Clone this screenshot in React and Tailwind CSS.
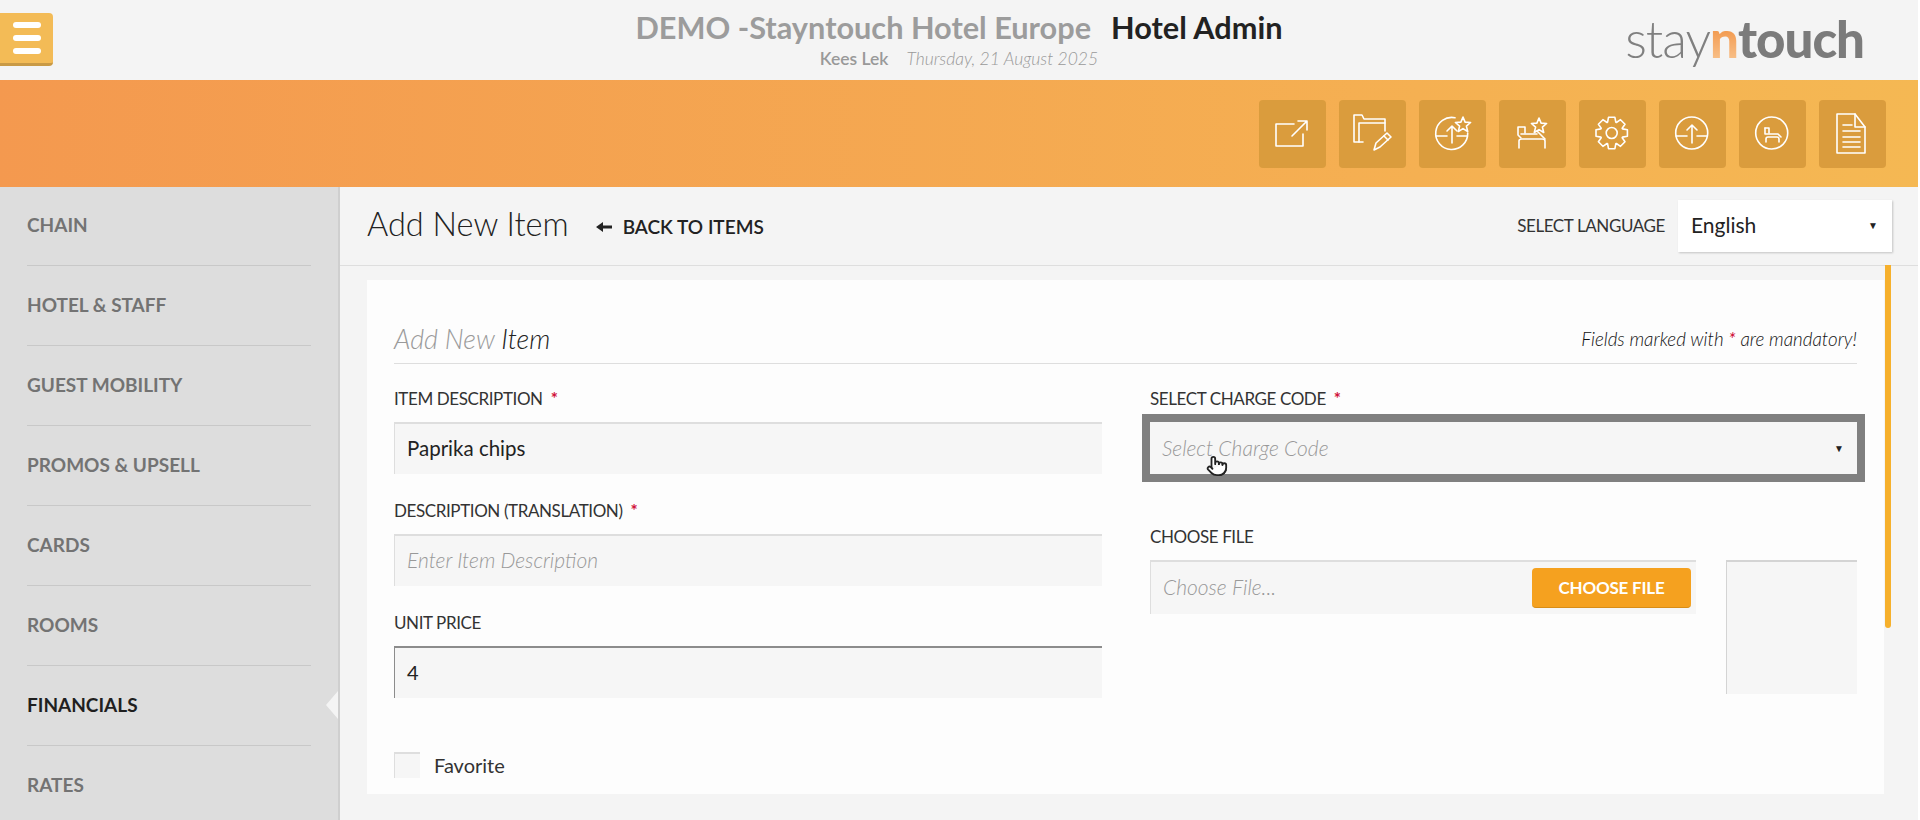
import React from "react";
import { Pointer } from "lucide-react";

const navItems = ["CHAIN", "HOTEL & STAFF", "GUEST MOBILITY", "PROMOS & UPSELL", "CARDS", "ROOMS", "FINANCIALS", "RATES"];

// 8 tooth gear outline, used by the settings button
const gearPath = () => {
  const pts = [];
  for (let i = 0; i < 8; i++) {
    const a = (i * Math.PI) / 4;
    [[-0.36, 11.5], [-0.2, 16], [0.2, 16], [0.36, 11.5]].forEach(([d, r]) => {
      pts.push(`${(32.7 + r * Math.cos(a + d)).toFixed(1)} ${(33 + r * Math.sin(a + d)).toFixed(1)}`);
    });
  }
  return "M" + pts.join("L") + "Z";
};

const Star = ({ cx, cy, r = 8 }) => {
  const pts = [];
  for (let i = 0; i < 10; i++) {
    const a = -Math.PI / 2 + (i * Math.PI) / 5;
    const rad = i % 2 ? r * 0.45 : r;
    pts.push(`${(cx + rad * Math.cos(a)).toFixed(1)},${(cy + rad * Math.sin(a)).toFixed(1)}`);
  }
  return <polygon points={pts.join(" ")} />;
};

const icons = [
  <>
    <path d="M35 24H17V46H44V34" />
    <path d="M33 36L48 21M39 21H48V30" />
  </>,
  <>
    <path d="M24 42H15V15H23L25 19H46V31" />
    <path d="M20 42V23H46" />
    <path d="M35 50L37 43L48 33L52 37L41 47Z" />
    <path d="M45 36L49 40" />
  </>,
  <>
    <path d="M36 17.8A16 16 0 1 0 48.7 33" />
    <path d="M17 36H28M38 36H48" />
    <path d="M33 43V26M28 31L33 26L38 31" />
    <Star cx={44} cy={25} />
  </>,
  <>
    <path d="M19 27H26V33M19 27V35L22 38" />
    <path d="M22 34H38M38 31L46 39" />
    <path d="M20 48V41Q20 39 23 39H43Q46 39 46 41V48" />
    <Star cx={40} cy={26} />
  </>,
  <>
    <path d={gearPath()} />
    <circle cx="32.7" cy="33" r="5.5" />
  </>,
  <>
    <circle cx="32.7" cy="33" r="16" />
    <path d="M17 36H28M38 36H48" />
    <path d="M33 43V25M28 30L33 25L38 30" />
  </>,
  <>
    <circle cx="32.7" cy="33" r="16" />
    <path d="M26 28V34H39L42 37" />
    <path d="M26 28H30V33" />
    <path d="M27 42V39Q27 37 29 37H38Q40 37 40 39V42" />
  </>,
  <>
    <path d="M18 14H36L46 27V53H18Z" />
    <path d="M36 14V27H46" />
    <path d="M24 25H33M24 31H41M24 37H41M24 42H41M24 47H41" />
  </>,
];

const Req = () => <span className="ml-2 font-bold text-[#d0103a]">*</span>;

function Field({ label, required, children }) {
  return (
    <div>
      <div className="flex h-6 items-center text-[17px] tracking-[-0.4px] text-[#333]">
        {label}
        {required && <Req />}
      </div>
      <div className="mt-[11px]">{children}</div>
    </div>
  );
}

const inputBase = "flex h-[52px] items-center border-t-2 border-l border-[#dedede] bg-[#f6f6f6] pb-[2px] pl-3";

export default function App() {
  return (
    <div className="h-[820px] w-[1920px] overflow-hidden bg-white font-[Lato,sans-serif]">
      <div className="w-[1918px]">
        {/* top bar */}
        <div className="grid h-20 grid-cols-[1fr_auto_1fr] bg-[#f4f4f4]">
          <div>
            <button className="mt-[13px] flex h-[53px] w-[53px] flex-col items-center justify-center gap-[7px] rounded-r-sm border-b-[3px] border-[#c99a45] bg-[#f3bb56]">
              <span className="h-[6px] w-[28px] rounded-sm bg-white" />
              <span className="h-[6px] w-[28px] rounded-sm bg-white" />
              <span className="h-[6px] w-[28px] rounded-sm bg-white" />
            </button>
          </div>
          <div className="flex flex-col items-center pt-[8px]">
            <div className="flex h-10 items-center text-[30.7px] font-bold">
              <span className="text-[#9c9c9c]">DEMO -Stayntouch Hotel Europe</span>
              <span className="ml-[20px] text-[#222]">Hotel Admin</span>
            </div>
            <div className="-mt-[2px] flex text-[17.5px]">
              <span className="font-semibold text-[#999]">Kees Lek</span>
              <span className="ml-[18px] font-light italic text-[#999]">Thursday, 21 August 2025</span>
            </div>
          </div>
          <div className="flex items-center justify-end pr-[54px]">
            <div className="-mt-1 flex items-baseline text-[51px] leading-none tracking-[-1px]">
              <span className="font-light text-[#808080]">stay</span>
              <span className="bg-gradient-to-b from-[#ee8420] to-[#f8c590] bg-clip-text font-black text-transparent">n</span>
              <span className="font-black text-[#7b7b7b]">touch</span>
            </div>
          </div>
        </div>

        {/* orange action band */}
        <div className="flex h-[107px] items-center justify-end gap-[13px] bg-gradient-to-r from-[#f4994f] to-[#f5b853] pr-[32px]">
          {icons.map((icon, i) => (
            <button key={i} className="h-[68px] w-[67px] rounded bg-[#da9c3d]">
              <svg viewBox="0 0 67 68" className="h-[68px] w-[67px]" fill="none" stroke="white" strokeWidth="1.6" strokeLinejoin="round" strokeLinecap="round">
                {icon}
              </svg>
            </button>
          ))}
        </div>

        <div className="flex h-[633px]">
          {/* sidebar */}
          <div className="relative h-full w-[340px] shrink-0 overflow-hidden border-r-2 border-[#cfcfcf] bg-[#dddddd]">
            <div className="-mt-[1px] px-[27px]">
              {navItems.map((item) => (
                <div
                  key={item}
                  className={`flex h-20 items-center border-b border-[#c8c8c8] pb-[1px] text-[19px] font-bold ${item === "FINANCIALS" ? "text-[#1f1f1f]" : "text-[#737373]"}`}
                >
                  {item}
                </div>
              ))}
            </div>
            <div className="absolute right-0 top-[504px] h-0 w-0 border-y-[14px] border-r-[12px] border-y-transparent border-r-[#f4f4f4]" />
          </div>

          {/* main */}
          <div className="relative flex-1 bg-[#f4f4f4]">
            <div className="flex h-[79px] items-center border-b border-[#dedede] pl-[27px] pr-[26px]">
              <h1 className="-mt-[3px] text-[32.5px] font-light text-[#222]">Add New Item</h1>
              <span className="ml-[27px] mt-[2px] flex items-center text-[19px] font-semibold text-[#222]">
                <svg viewBox="0 0 16 12" className="mr-[11px] h-3 w-4" fill="#222">
                  <path d="M0 6L7 1V4.5H16V7.5H7V11Z" />
                </svg>
                BACK TO ITEMS
              </span>
              <span className="ml-auto text-[17px] tracking-[-0.4px] text-[#333]">SELECT LANGUAGE</span>
              <div className="ml-[13px] flex h-[52px] w-[214px] items-center justify-between bg-white pb-[2px] pl-[13px] pr-[14px] text-[21px] text-[#222] shadow-[1px_1px_2px_rgba(0,0,0,0.2)]">
                English
                <span className="text-[10px]">▼</span>
              </div>
            </div>

            <div className="absolute right-[27px] top-[78px] h-[363px] w-[6px] rounded-b-sm bg-[#f6b02c]" />

            <div className="ml-[27px] mr-[34px] mt-[14px] h-[514px] bg-[#fdfdfd] px-[27px]">
              <div className="flex h-[84px] items-center justify-between border-b border-[#dedede] pt-[36px]">
                <div className="text-[27px] font-light italic">
                  <span className="text-[#9a9a9a]">Add New </span>
                  <span className="text-[#222]">Item</span>
                </div>
                <div className="text-[18.8px] font-light italic text-[#111]">
                  Fields marked with <span className="font-normal text-[#d0103a]">*</span> are mandatory!
                </div>
              </div>

              <div className="grid grid-cols-[708px_707px] gap-x-[48px] pt-[23px]">
                {/* left column */}
                <div className="flex flex-col gap-[25px]">
                  <Field label="ITEM DESCRIPTION" required>
                    <div className={`${inputBase} text-[20.5px] text-[#222]`}>Paprika chips</div>
                  </Field>
                  <Field label="DESCRIPTION (TRANSLATION)" required>
                    <div className={`${inputBase} text-[21px] font-light italic text-[#999]`}>Enter Item Description</div>
                  </Field>
                  <Field label="UNIT PRICE">
                    <div className="flex h-[52px] items-center border-t-2 border-l border-[#8c8c8c] bg-[#f6f6f6] pb-[3px] pl-3 text-[20px] text-[#222]">4</div>
                  </Field>
                  <label className="mt-[27px] flex items-center text-[20px] text-[#333]">
                    <span className="h-[26px] w-[26px] border-t-2 border-l border-[#dedede] bg-[#f6f6f6]" />
                    <span className="ml-[14px]">Favorite</span>
                  </label>
                </div>

                {/* right column */}
                <div>
                  <Field label="SELECT CHARGE CODE" required>
                    <div className="relative flex h-[52px] items-center justify-between bg-[#f6f6f6] pl-3 pr-[13px] text-[21px] font-light italic text-[#999] outline-8 outline-[#808080]">
                      Select Charge Code
                      <span className="text-[10px] not-italic text-[#222]">▼</span>
                      <Pointer className="absolute left-[56px] top-[33px] h-[22px] w-[22px] fill-white text-[#222]" strokeWidth={2} />
                    </div>
                  </Field>
                  <div className="mt-[51px] flex h-6 items-center text-[17px] tracking-[-0.4px] text-[#333]">CHOOSE FILE</div>
                  <div className="mt-[11px] flex items-start gap-[30px]">
                    <div className="flex h-[54px] flex-1 items-center justify-between border-t-2 border-l border-[#dedede] bg-[#f6f6f6] pl-3 pr-[5px] text-[21px] font-light italic text-[#999]">
                      <span className="-mt-[2px]">Choose File...</span>
                      <button className="h-[40px] w-[159px] rounded-sm border-b border-[#d88d16] bg-[#f5a11f] text-[17px] font-bold not-italic tracking-[-0.2px] text-white">
                        CHOOSE FILE
                      </button>
                    </div>
                    <div className="h-[134px] w-[131px] border-t-2 border-l border-[#d4d4d4] bg-[#f6f6f6]" />
                  </div>
                </div>
              </div>
            </div>
          </div>
        </div>
      </div>
    </div>
  );
}
